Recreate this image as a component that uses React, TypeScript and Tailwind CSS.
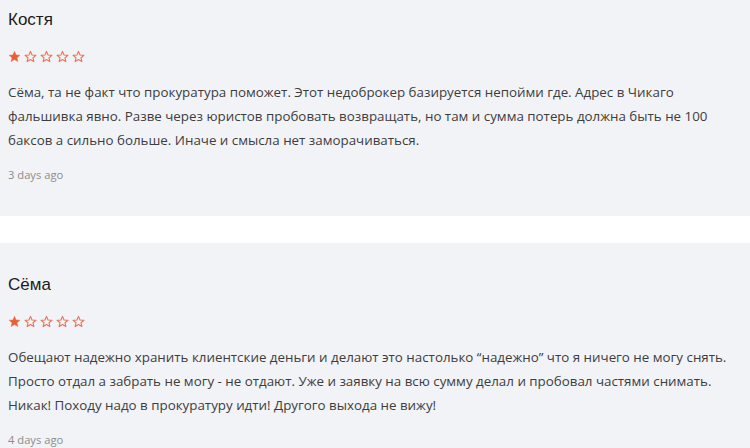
import React from "react";

const Star = ({ filled }: { filled: boolean }) => (
  <svg width="13" height="13" viewBox="0 0 24 24" className="shrink-0">
    <path
      d="M12 2.5l2.9 6.6 7.1.6-5.4 4.7 1.6 7-6.2-3.8-6.2 3.8 1.6-7L2 9.7l7.1-.6z"
      fill={filled ? "#ea5f36" : "none"}
      stroke="#ea6f4c"
      strokeWidth={filled ? 1 : 2}
      strokeLinejoin="round"
    />
  </svg>
);

const Card = ({
  name,
  lines,
  date,
  first,
}: {
  name: string;
  lines: string[];
  date: string;
  first?: boolean;
}) => (
  <div
    className={`bg-[#f2f3f7] px-2 pt-[32px] pb-[33px] ${first ? "-mt-[22px]" : ""}`}
  >
    <div className="text-[17px] leading-[20px] text-[#1c1c1c] font-['Liberation_Sans',Arial,sans-serif]">
      {name}
    </div>
    <div className="mt-[20px] flex gap-[3px]">
      <Star filled />
      <Star filled={false} />
      <Star filled={false} />
      <Star filled={false} />
      <Star filled={false} />
    </div>
    <div className="mt-[17px] text-[13.35px] leading-[24px] text-[#3d3d3d] font-['Open_Sans',sans-serif]">
      {lines.map((l, i) => (
        <div key={i} className="whitespace-nowrap">
          {l}
        </div>
      ))}
    </div>
    <div className="mt-[15px] text-[11.2px] leading-[16px] text-[#8c8c8c] font-['Open_Sans',sans-serif]">
      {date}
    </div>
  </div>
);

export default function App() {
  return (
    <div className="w-[750px] h-[448px] overflow-hidden bg-[#f2f3f7]">
      <Card
        first
        name="Костя"
        lines={[
          "Сёма, та не факт что прокуратура поможет. Этот недоброкер базируется непойми где. Адрес в Чикаго",
          "фальшивка явно. Разве через юристов пробовать возвращать, но там и сумма потерь должна быть не 100",
          "баксов а сильно больше. Иначе и смысла нет заморачиваться.",
        ]}
        date="3 days ago"
      />
      <div className="h-[27px] bg-white" />
      <Card
        name="Сёма"
        lines={[
          "Обещают надежно хранить клиентские деньги и делают это настолько “надежно” что я ничего не могу снять.",
          "Просто отдал а забрать не могу - не отдают. Уже и заявку на всю сумму делал и пробовал частями снимать.",
          "Никак! Походу надо в прокуратуру идти! Другого выхода не вижу!",
        ]}
        date="4 days ago"
      />
    </div>
  );
}
